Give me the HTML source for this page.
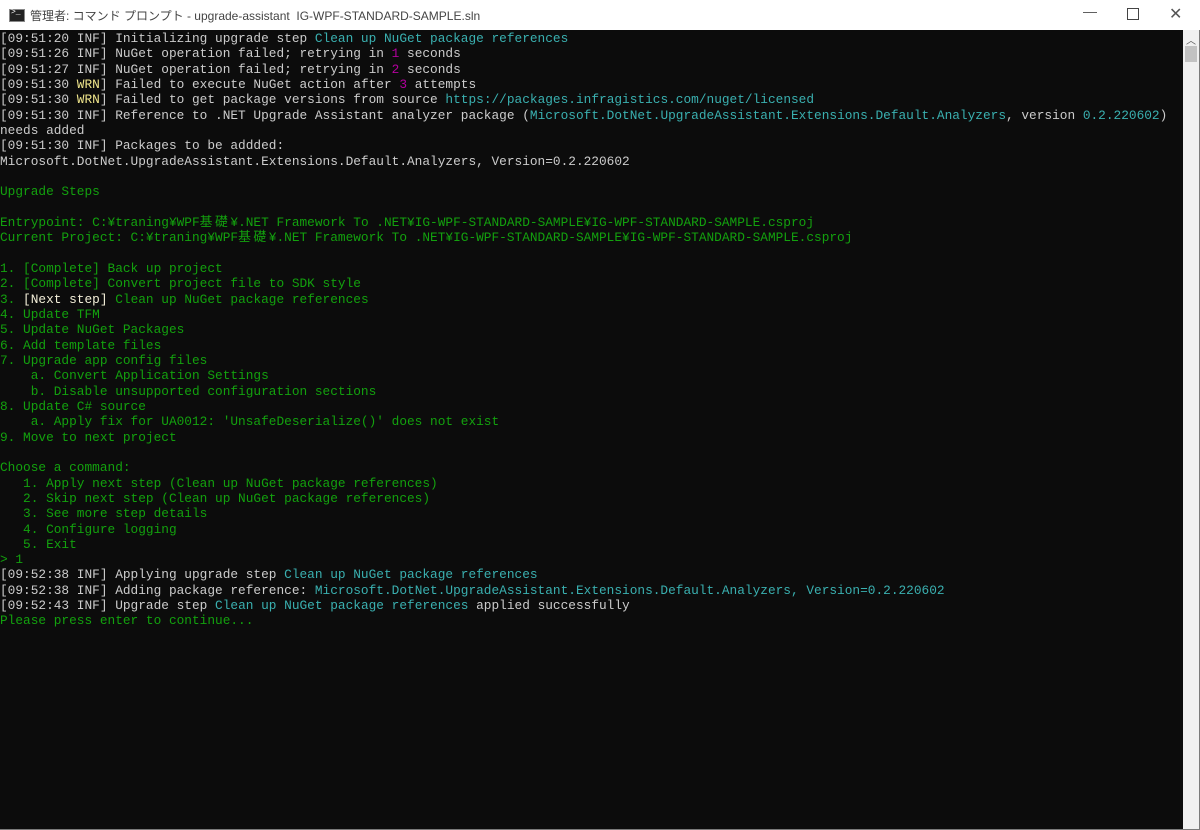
<!DOCTYPE html>
<html><head><meta charset="utf-8"><style>
body{margin:0;width:1200px;height:830px;background:#fff;overflow:hidden;position:relative;font-family:"Liberation Sans","Noto Sans CJK JP",sans-serif}
.win{position:absolute;left:0;top:0;width:1198px;height:828px;border:1px solid #7a7a7a;background:#fff}
.title{position:absolute;left:0;top:0;width:1200px;height:30px;background:#fff}
.ttl{position:absolute;left:30px;top:7px;font-size:12px;color:#444;white-space:nowrap}
.ico{position:absolute;left:9px;top:9px;width:14px;height:11px;background:#222;border:1px solid #888}
.ico:after{content:">_";position:absolute;left:1px;top:-2px;color:#fff;font:8px "Liberation Mono",monospace}
.ctl{position:absolute;top:6px;font-size:14px;color:#333}
.term{position:absolute;left:0;top:30px;width:1183px;height:799px;background:#0c0c0c}
.sb{position:absolute;left:1183px;top:30px;width:16px;height:799px;background:#f0f0f0}
.thumb{position:absolute;left:1185px;top:46px;width:12px;height:16px;background:#c2c2c2}
pre{position:absolute;left:0;top:31px;margin:0;font:12.8px/15.33px "Liberation Mono","Noto Sans CJK JP",monospace;color:#cccccc;white-space:pre}
.c{color:#3ab0b0}.g{color:#13a10e}.m{color:#b4009e}.y{color:#f0e68c}.w{color:#f2eed8}
.k{display:inline-block;width:15.36px}
</style></head><body>
<div class="win"></div>
<div class="title"><div class="ico"></div><div class="ttl">管理者: コマンド プロンプト - upgrade-assistant&nbsp; IG-WPF-STANDARD-SAMPLE.sln</div>
<div class="ctl" style="left:1083px;top:3px;color:#555">—</div><div class="ctl" style="left:1127px;top:8px;width:10px;height:10px;border:1px solid #444"></div><div class="ctl" style="left:1169px;top:4px;font-size:16px;color:#555">✕</div></div>
<div class="term"></div><div class="sb"></div><div class="thumb"></div>
<div style="position:absolute;left:1186px;top:32px;font-size:10px;color:#555">︿</div>
<pre>[09:51:20 INF] Initializing upgrade step <span class="c">Clean up NuGet package references</span>
[09:51:26 INF] NuGet operation failed; retrying in <span class="m">1</span> seconds
[09:51:27 INF] NuGet operation failed; retrying in <span class="m">2</span> seconds
[09:51:30 <span class="y">WRN</span>] Failed to execute NuGet action after <span class="m">3</span> attempts
[09:51:30 <span class="y">WRN</span>] Failed to get package versions from source <span class="c">https://packages.infragistics.com/nuget/licensed</span>
[09:51:30 INF] Reference to .NET Upgrade Assistant analyzer package (<span class="c">Microsoft.DotNet.UpgradeAssistant.Extensions.Default.Analyzers</span>, version <span class="c">0.2.220602</span>)
needs added
[09:51:30 INF] Packages to be addded:
Microsoft.DotNet.UpgradeAssistant.Extensions.Default.Analyzers, Version=0.2.220602

<span class="g">Upgrade Steps</span>

<span class="g">Entrypoint: C:¥traning¥WPF<span class="k">基</span><span class="k">礎</span>¥.NET Framework To .NET¥IG-WPF-STANDARD-SAMPLE¥IG-WPF-STANDARD-SAMPLE.csproj</span>
<span class="g">Current Project: C:¥traning¥WPF<span class="k">基</span><span class="k">礎</span>¥.NET Framework To .NET¥IG-WPF-STANDARD-SAMPLE¥IG-WPF-STANDARD-SAMPLE.csproj</span>

<span class="g">1. [Complete] Back up project</span>
<span class="g">2. [Complete] Convert project file to SDK style</span>
<span class="g">3. </span><span class="w">[Next step]</span><span class="g"> Clean up NuGet package references</span>
<span class="g">4. Update TFM</span>
<span class="g">5. Update NuGet Packages</span>
<span class="g">6. Add template files</span>
<span class="g">7. Upgrade app config files</span>
<span class="g">    a. Convert Application Settings</span>
<span class="g">    b. Disable unsupported configuration sections</span>
<span class="g">8. Update C# source</span>
<span class="g">    a. Apply fix for UA0012: 'UnsafeDeserialize()' does not exist</span>
<span class="g">9. Move to next project</span>

<span class="g">Choose a command:</span>
<span class="g">   1. Apply next step (Clean up NuGet package references)</span>
<span class="g">   2. Skip next step (Clean up NuGet package references)</span>
<span class="g">   3. See more step details</span>
<span class="g">   4. Configure logging</span>
<span class="g">   5. Exit</span>
<span class="g">&gt; 1</span>
[09:52:38 INF] Applying upgrade step <span class="c">Clean up NuGet package references</span>
[09:52:38 INF] Adding package reference: <span class="c">Microsoft.DotNet.UpgradeAssistant.Extensions.Default.Analyzers, Version=0.2.220602</span>
[09:52:43 INF] Upgrade step <span class="c">Clean up NuGet package references</span> applied successfully
<span class="g">Please press enter to continue...</span></pre>
</body></html>
